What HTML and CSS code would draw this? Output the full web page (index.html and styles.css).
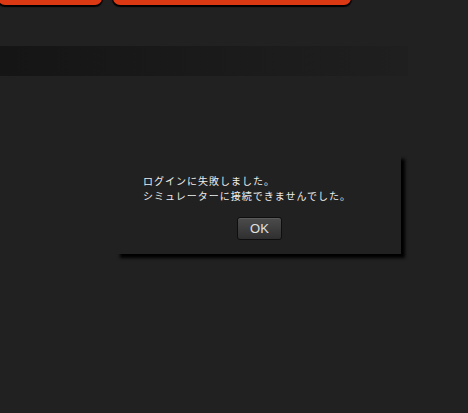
FILE: index.html
```html
<!DOCTYPE html>
<html lang="ja">
<head>
<meta charset="utf-8">
<link rel="stylesheet" href="styles.css">
</head>
<body>
<div class="topbar">
  <div class="tab tab-left"></div>
  <div class="tab tab-right"></div>
</div>
<div class="band"></div>
<div class="dialog">
  <p class="msg">ログインに失敗しました。<br>シミュレーターに接続できませんでした。</p>
  <div class="actions"><button class="ok">OK</button></div>
</div>
</body>
</html>
```

FILE: styles.css
```css
html, body {
  margin: 0;
  padding: 0;
  background: #212121;
  width: 468px;
  height: 413px;
  overflow: hidden;
}
.topbar {
  display: flex;
  height: 5px;
  gap: 11px;
  overflow: visible;
}
.tab {
  height: 30px;
  margin-top: -25px;
  background: #da3914;
  border-radius: 0 0 7px 7px;
  box-shadow: 0 1px 1px 1px #000;
  flex: none;
}
.tab-left {
  width: 104px;
  margin-left: -2px;
}
.tab-right {
  width: 238px;
}
.band {
  margin-top: 41px;
  width: 408px;
  height: 30px;
  background: linear-gradient(to right, #151515 0%, #1a1a1a 50%, #1f1f1f 100%);
}
.dialog {
  margin: 79px 0 0 116px;
  width: 285px;
  height: 99px;
  box-sizing: border-box;
  padding: 18px 0 0 27px;
  background: #212121;
  box-shadow: 4px 4px 3px #000;
}
.msg {
  margin: 0;
  font-family: "Noto Sans CJK JP", sans-serif;
  font-size: 10px;
  letter-spacing: 1px;
  line-height: 15px;
  color: #ededed;
}
.actions {
  display: flex;
  padding: 14px 0 0 94px;
}
.ok {
  width: 45px;
  height: 23px;
  padding: 0;
  border: 1px solid #0e0e0e;
  border-radius: 3px;
  background: linear-gradient(#4c4c4c, #2f2f2f);
  box-shadow: inset 0 1px 0 #5a5a5a;
  color: #e0e0e0;
  font-family: "Liberation Sans", Arial, sans-serif;
  font-size: 13px;
}
```
